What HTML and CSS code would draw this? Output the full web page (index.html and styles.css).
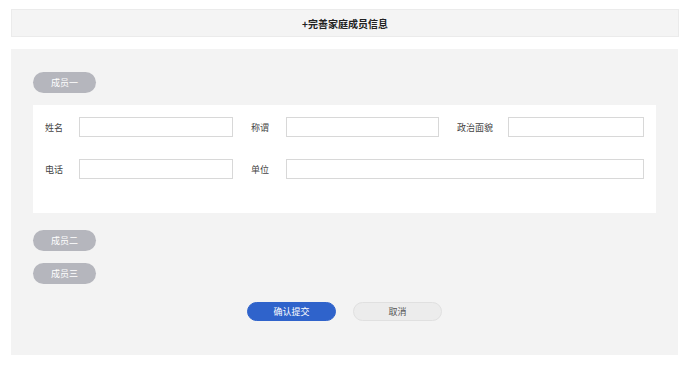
FILE: index.html
```html
<!DOCTYPE html>
<html lang="zh-CN">
<head>
    <meta charset="UTF-8">
    <title>完善家庭成员信息</title>
    <link rel="stylesheet" href="styles.css">
</head>
<body>
    <div class="header">+完善家庭成员信息</div>
    <div class="panel">
        <div class="member">成员一</div>
        <div class="card">
            <label>姓名</label>
            <input type="text">
            <label class="gap">称谓</label>
            <input type="text">
            <label class="gap">政治面貌</label>
            <input type="text">
            <label>电话</label>
            <input type="text">
            <label class="gap">单位</label>
            <input type="text" class="wide">
        </div>
        <div class="member second">成员二</div>
        <div class="member third">成员三</div>
        <div class="actions">
            <button class="btn primary">确认提交</button>
            <button class="btn">取消</button>
        </div>
    </div>
</body>
</html>
```

FILE: styles.css
```css
body { margin: 0; font-family: "Noto Sans CJK SC", "Microsoft YaHei", sans-serif; font-size: 9px; color: #444; background: #fff; }
.header { margin: 9px 7px 0 11px; height: 27px; line-height: 27px; text-align: center; background: #f4f4f4; border: 1px solid #ebebeb; font-size: 10px; font-weight: bold; color: #222; box-sizing: border-box; height: 28px; }
.panel { margin: 12px 8px 0 11px; background: #f3f3f3; padding: 23px 22px 34px 22px; height: 306px; box-sizing: border-box; }
.member { width: 63px; height: 21px; line-height: 21px; border-radius: 11px; background: #b5b6bd; color: #fff; text-align: center; }
.member.second { margin-top: 17px; }
.member.third { margin-top: 12px; }
.card { margin-top: 12px; background: #fff; height: 108px; box-sizing: border-box; padding: 12px 12px 0 12px; display: grid; grid-template-columns: 34px 154px 53px 153px 69px 1fr; grid-auto-rows: 20px; row-gap: 22px; align-items: center; }
.card label { color: #444; }
.card label.gap { padding-left: 18px; }
.card input { height: 20px; box-sizing: border-box; border: 1px solid #d8d8d8; margin: 0; padding: 0 4px; background: #fff; width: 100%; }
.card input.wide { grid-column: 4 / 7; }
.actions { margin-top: 18px; display: flex; justify-content: center; gap: 17px; }
.btn { width: 89px; height: 19px; border-radius: 10px; border: 1px solid #e0e0e0; background: #ececec; color: #555; font-family: inherit; font-size: 9px; padding: 0; }
.btn.primary { background: #2f63cb; border-color: #2f63cb; color: #fff; }
```
